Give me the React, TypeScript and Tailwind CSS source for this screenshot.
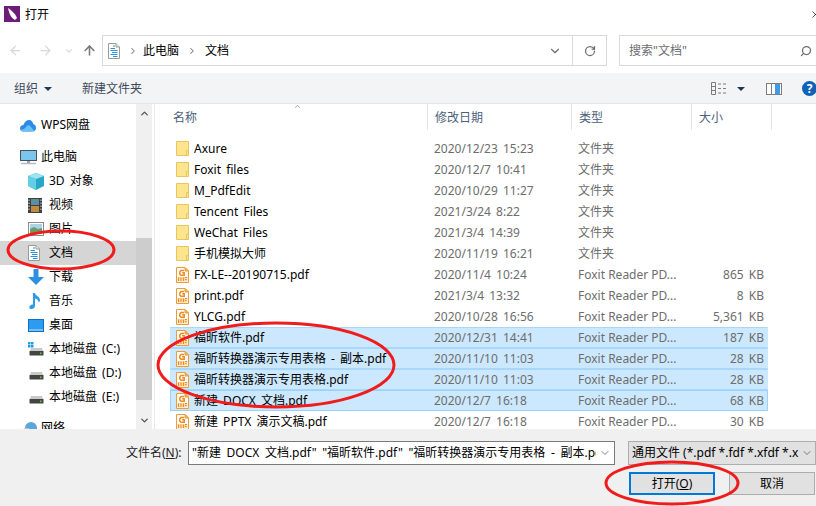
import { ArrowLeft, ArrowRight, ArrowUp, ChevronDown, ChevronRight, ChevronUp, RotateCw, Search, X } from 'lucide-react';
import type { ReactNode } from 'react';

const font = { fontFamily: '"Noto Sans", "Noto Sans CJK SC", sans-serif' };

const files = [
  { name: 'Axure', date: '2020/12/23 15:23', type: '文件夹', size: '', kind: 'folder' },
  { name: 'Foxit files', date: '2020/12/7 10:41', type: '文件夹', size: '', kind: 'folder' },
  { name: 'M_PdfEdit', date: '2020/10/29 11:27', type: '文件夹', size: '', kind: 'folder' },
  { name: 'Tencent Files', date: '2021/3/24 8:22', type: '文件夹', size: '', kind: 'folder' },
  { name: 'WeChat Files', date: '2021/3/4 14:39', type: '文件夹', size: '', kind: 'folder' },
  { name: '手机模拟大师', date: '2020/11/19 16:21', type: '文件夹', size: '', kind: 'folder' },
  { name: 'FX-LE--20190715.pdf', date: '2020/11/4 10:24', type: 'Foxit Reader PD...', size: '865 KB', kind: 'pdf' },
  { name: 'print.pdf', date: '2021/3/4 13:32', type: 'Foxit Reader PD...', size: '8 KB', kind: 'pdf' },
  { name: 'YLCG.pdf', date: '2020/10/28 16:56', type: 'Foxit Reader PD...', size: '5,361 KB', kind: 'pdf' },
  { name: '福昕软件.pdf', date: '2020/12/31 14:41', type: 'Foxit Reader PD...', size: '187 KB', kind: 'pdf', selected: true },
  { name: '福昕转换器演示专用表格 - 副本.pdf', date: '2020/11/10 11:03', type: 'Foxit Reader PD...', size: '28 KB', kind: 'pdf', selected: true },
  { name: '福昕转换器演示专用表格.pdf', date: '2020/11/10 11:03', type: 'Foxit Reader PD...', size: '28 KB', kind: 'pdf', selected: true },
  { name: '新建 DOCX 文档.pdf', date: '2020/12/7 16:18', type: 'Foxit Reader PD...', size: '68 KB', kind: 'pdf', selected: true, focused: true },
  { name: '新建 PPTX 演示文稿.pdf', date: '2020/12/7 16:18', type: 'Foxit Reader PD...', size: '30 KB', kind: 'pdf' },
];

function FolderIcon() {
  return (
    <svg width="13" height="15" viewBox="0 0 13 15" className="shrink-0">
      <path d="M.5.5h12v14H.5z" fill="#fde48f" stroke="#e9c65a" />
      <path d="M10.5 14.5V9.5h2" fill="none" stroke="#e9c65a" />
    </svg>
  );
}

function PdfIcon() {
  return (
    <svg width="13" height="16" viewBox="0 0 13 16" className="shrink-0">
      <path d="M.5.5h8.500l3.500 3.500v11.500H.5z" fill="#fff" stroke="#f09a33" />
      <path d="M9 .5V4h3.500z" fill="#f7b566" stroke="#f09a33" />
      <path d="M8 3.500H5L3.800 5v2l1.200 1.200h3.200V5.800H6.200" fill="none" stroke="#ef8a1f" strokeWidth="1.500" />
      <rect x="1.500" y="10" width="10" height="4.500" fill="#fcd9a8" />
      <path d="M2.500 10.500v3.500M5 10.500v3.500M7.500 10.500v3.500M9 10.500h2M9 12.500h1.500" stroke="#ef8a1f" strokeWidth="1" />
    </svg>
  );
}

function DocIcon() {
  return (
    <svg width="12" height="16" viewBox="0 0 12 16" className="shrink-0">
      <path d="M.5.5h7.500l3.500 3.500v11.500H.5z" fill="#fff" stroke="#9a9a9a" />
      <path d="M8 .5V4h3.500" fill="#e8e8e8" stroke="#9a9a9a" />
      <path d="M5 3h2M2.500 5.500h4.500M2.500 7.500h7M4 9.500h5.500M2.500 11.500h7M5 13.500h4.500" stroke="#2f8fdc" />
    </svg>
  );
}

function CloudIcon() {
  return (
    <svg width="16" height="13" viewBox="0 0 16 13">
      <path d="M3 12.500C.8 12.500 0 10.800 0 9.500 0 7.500 1.500 6 3.500 6 4.500 2.500 7 1 9 1c2.500 0 4 2 4.200 4C15 5.500 16 7.200 16 9c0 2-1.500 3.500-3.500 3.500z" fill="#2b8be6" />
      <path d="M3 12.500C1.500 12.500 .5 11.500 .5 10c1.500 1 3 .5 4-.5l2.500-2.500c1-1 2-1 3 0l4 4.500c-.5.700-1.200 1-2 1z" fill="#6cc0f7" />
    </svg>
  );
}

function PcIcon() {
  return (
    <svg width="17" height="15" viewBox="0 0 17 15">
      <rect x=".5" y=".5" width="16" height="10" fill="#7cc6ee" stroke="#47525c" />
      <path d="M7 11h3v2H7z" fill="#9aa5ad" />
      <path d="M1 13.500h15" stroke="#b4bcc2" strokeWidth="1.500" />
    </svg>
  );
}

function CubeIcon() {
  return (
    <svg width="16" height="17" viewBox="0 0 16 17">
      <path d="M8 0l8 3v10l-8 4-8-4V3z" fill="#2aa6c9" />
      <path d="M8 0l8 3-8 3-8-3z" fill="#9be6f0" />
      <path d="M0 3l8 3v11l-8-4z" fill="#62d0e2" />
    </svg>
  );
}

function VideoIcon() {
  return (
    <svg width="14" height="15" viewBox="0 0 14 15">
      <rect width="14" height="15" fill="#3c4043" />
      <rect x="3" y="1" width="8" height="6" fill="#5a8f9f" />
      <rect x="3" y="8" width="8" height="6" fill="#c28a3a" />
      <path d="M1 1.500v12M13 1.500v12" stroke="#d8d8d8" strokeDasharray="1.500 1.500" />
    </svg>
  );
}

function PictureIcon() {
  return (
    <svg width="16" height="14" viewBox="0 0 16 14">
      <rect x=".5" y=".5" width="15" height="13" fill="#fff" stroke="#8c8c8c" />
      <rect x="2" y="2" width="12" height="5" fill="#a9d3e8" />
      <path d="M2 7l4-2 4 2 4-1v6H2z" fill="#6f9a66" />
    </svg>
  );
}

function DownloadIcon() {
  return (
    <svg width="16" height="16" viewBox="0 0 16 16">
      <path d="M5.500 0h5v8H16l-8 8-8-8h5.500z" fill="#2f8fe0" />
    </svg>
  );
}

function MusicIcon() {
  return (
    <svg width="14" height="16" viewBox="0 0 14 16">
      <path d="M5 0h2c0 3 5 3 5 7 0 1-.5 2-1.500 2.500.500-2-1.500-3.500-3.500-4V13c0 1.800-1.800 3-3.800 3S1 14.800 1.500 13.500 3.500 11 5 11.500z" fill="#2f9be8" />
    </svg>
  );
}

function DesktopIcon() {
  return (
    <svg width="16" height="13" viewBox="0 0 16 13">
      <rect x=".5" y=".5" width="15" height="12" fill="#2f9bf0" stroke="#0f6fc4" />
      <path d="M1 11h14" stroke="#bfe2fb" />
    </svg>
  );
}

function DiskIcon({ win }: { win?: boolean }) {
  return (
    <svg width="16" height="14" viewBox="0 0 16 14">
      {win && (
        <g fill="#1e9be8">
          <rect x="0" y="0" width="2.500" height="2.500" />
          <rect x="3" y="0" width="2.500" height="2.500" />
          <rect x="0" y="3" width="2.500" height="2.500" />
          <rect x="3" y="3" width="2.500" height="2.500" />
        </g>
      )}
      <path d="M3 6h11l1 3H2z" fill="#c9c9c9" />
      <rect x="1.500" y="9" width="14" height="4.500" rx="0.500" fill="#444" />
      <rect x="12" y="10.500" width="1.500" height="1.500" fill="#62d04b" />
    </svg>
  );
}

function NetIcon() {
  return (
    <svg width="18" height="14" viewBox="0 0 18 14">
      <circle cx="11" cy="7" r="6" fill="#5aa7d8" />
      <path d="M0 10l5-3h4v5H0z" fill="#b7c4cf" />
    </svg>
  );
}

function NavRow({ icon, label, indent, active }: { icon: ReactNode; label: string; indent?: boolean; active?: boolean }) {
  return (
    <div className={`flex h-6 shrink-0 items-center ${indent ? 'pl-[28px]' : 'pl-5'} ${active ? 'bg-[#d5d5d5]' : ''}`}>
      <span className="flex w-[21px] shrink-0 items-center justify-start">{icon}</span>
      <span className="whitespace-nowrap text-black">{label}</span>
    </div>
  );
}

function HeaderCell({ label, className }: { label: string; className: string }) {
  return <div className={`h-[26px] shrink-0 truncate border-r border-[#e5e5e5] pl-[7px] pt-px leading-[26px] text-[#4c607a] ${className}`}>{label}</div>;
}

export default function App() {
  return (
    <div className="relative flex h-[506px] w-[816px] flex-col overflow-hidden bg-white text-xs [word-spacing:2px]" style={font}>
      {/* title bar */}
      <div className="flex h-[35px] shrink-0 items-start pl-1 pt-[6px]">
        <svg width="16" height="16" viewBox="0 0 16 16" className="shrink-0">
          <rect width="16" height="16" fill="#6b1e78" />
          <path d="M4 2c3 2 7 5 9 10l-2 2C7 12 5 7 4 2z" fill="#fff" />
        </svg>
        <span className="ml-[5px] pt-px text-black">打开</span>
        <X className="ml-auto mt-[3px] -mr-[5px] h-[11px] w-[11px] text-black" strokeWidth={1.5} />
      </div>

      {/* nav row */}
      <div className="flex h-[31px] shrink-0 items-center">
        <ArrowLeft className="ml-2 h-[15px] w-[15px] text-[#d8d8d8]" strokeWidth={2} />
        <ArrowRight className="ml-[15px] h-[15px] w-[15px] text-[#d8d8d8]" strokeWidth={2} />
        <ChevronDown className="ml-[11px] h-[10px] w-[10px] text-[#d0d0d0]" strokeWidth={2.5} />
        <ArrowUp className="ml-[8px] h-[15px] w-[15px] text-[#7a7a7a]" strokeWidth={2.5} />
        <div className="ml-[5px] flex h-[31px] w-[505px] items-center border border-[#d9d9d9] pl-[5px]">
          <DocIcon />
          <ChevronRight className="ml-[8px] h-[10px] w-[10px] text-[#7a7a7a]" strokeWidth={2.5} />
          <span className="ml-[5px] pt-px text-black">此电脑</span>
          <ChevronRight className="ml-[8px] h-[10px] w-[10px] text-[#7a7a7a]" strokeWidth={2.5} />
          <span className="ml-[8px] pt-px text-black">文档</span>
          <ChevronDown className="ml-auto h-[14px] w-[14px] text-[#6d6d6d]" strokeWidth={2} />
          <div className="ml-[10px] flex h-full w-[34px] items-center justify-center border-l border-[#d9d9d9]">
            <RotateCw className="h-[12px] w-[12px] text-[#6d6d6d]" strokeWidth={2.5} />
          </div>
        </div>
        <div className="ml-[12px] flex h-[31px] flex-1 items-center border-y border-l border-[#d9d9d9] pl-[9px] pr-1 text-[#6d6d6d]">
          <span>搜索"文档"</span>
          <Search className="ml-auto h-[12px] w-[12px] -scale-x-100 text-[#6d6d6d]" strokeWidth={2.5} />
        </div>
      </div>

      {/* toolbar */}
      <div className="mt-[7px] flex h-[31px] shrink-0 items-center border-b border-[#e6e6e6] bg-[#f3f4f6] pl-[14px] pt-px text-[#3c4a5c]">
        <span>组织</span>
        <span className="ml-[6px] h-0 w-0 border-x-[4px] border-t-[4px] border-x-transparent border-t-[#1f3655]" />
        <span className="ml-[30px]">新建文件夹</span>
        <svg width="17" height="13" viewBox="0 0 17 13" className="ml-auto">
          <path d="M.5.5h4v12h-4zM.5 4.500h4M.5 8.500h4M7 2h3M12 2h3M7 6.500h3M12 6.500h3M7 11h3M12 11h3" fill="none" stroke="#7d7d7d" />
        </svg>
        <span className="ml-[9px] h-0 w-0 border-x-[4px] border-t-[4px] border-x-transparent border-t-[#1f3655]" />
        <svg width="16" height="12" viewBox="0 0 16 12" className="ml-[21px]">
          <rect x=".5" y=".5" width="15" height="11" fill="#fff" stroke="#7d7d7d" />
          <rect x="9" y="1" width="5" height="10" fill="#3d9be9" />
          <path d="M5.500 1v10" stroke="#7d7d7d" />
        </svg>
        <div className="ml-[20px] -mr-px flex h-[15px] w-[15px] shrink-0 items-center justify-center rounded-full bg-[#0f62b8] text-[12px] font-bold text-white">?</div>
      </div>

      {/* body */}
      <div className="flex h-[325px] shrink-0 overflow-hidden">
        <div className="flex w-[136px] shrink-0 flex-col overflow-hidden pt-[9px]">
          <NavRow icon={<CloudIcon />} label="WPS网盘" />
          <div className="h-2 shrink-0" />
          <NavRow icon={<PcIcon />} label="此电脑" />
          <NavRow indent icon={<CubeIcon />} label="3D 对象" />
          <NavRow indent icon={<VideoIcon />} label="视频" />
          <NavRow indent icon={<PictureIcon />} label="图片" />
          <NavRow indent active icon={<DocIcon />} label="文档" />
          <NavRow indent icon={<DownloadIcon />} label="下载" />
          <NavRow indent icon={<MusicIcon />} label="音乐" />
          <NavRow indent icon={<DesktopIcon />} label="桌面" />
          <NavRow indent icon={<DiskIcon win />} label="本地磁盘 (C:)" />
          <NavRow indent icon={<DiskIcon />} label="本地磁盘 (D:)" />
          <NavRow indent icon={<DiskIcon />} label="本地磁盘 (E:)" />
          <div className="h-[7px] shrink-0" />
          <NavRow icon={<NetIcon />} label="网络" />
        </div>

        {/* sidebar scrollbar */}
        <div className="flex w-[16px] shrink-0 flex-col items-center bg-[#f0f0f0]">
          <ChevronUp className="mt-[4px] h-[11px] w-[11px] text-[#555]" strokeWidth={3} />
          <div className="mt-[119px] h-[162px] w-full shrink-0 bg-[#cdcdcd]" />
          <ChevronDown className="mt-[15px] h-[11px] w-[11px] text-[#555]" strokeWidth={3} />
        </div>
        <div className="ml-[2px] w-px shrink-0 bg-[#e9e9e9]" />

        <div className="relative min-w-0 flex-1">
          <div className="flex">
            <HeaderCell label="名称" className="ml-[11px] w-[262px]" />
            <HeaderCell label="修改日期" className="w-[144px]" />
            <HeaderCell label="类型" className="w-[120px]" />
            <HeaderCell label="大小" className="w-[80px]" />
          </div>
          <ChevronUp className="absolute left-[137px] -top-[2px] h-[9px] w-[11px] text-[#777]" strokeWidth={1.5} />
          <div className="mt-[8px] ml-[15px] w-[598px]">
            {files.map((f) => (
              <div
                key={f.name}
                className={`flex h-[21px] items-center border-y ${
                  f.focused
                    ? 'border-x border-[#99d1ff] bg-[#cce8ff]'
                    : f.selected
                      ? 'border-x border-x-[#cce8ff] border-y-[#a9d7fb] bg-[#cce8ff]'
                      : 'border-x border-transparent'
                }`}
              >
                <span className="ml-[5px] flex w-[18px] shrink-0">{f.kind === 'folder' ? <FolderIcon /> : <PdfIcon />}</span>
                <span className="w-[240px] shrink-0 truncate text-black">{f.name}</span>
                <span className="w-[144px] shrink-0 text-[#6d6d6d]">{f.date}</span>
                <span className="w-[115px] shrink-0 truncate text-[#6d6d6d] [word-spacing:0px]">{f.type}</span>
                <span className="w-[71px] shrink-0 text-right text-[#6d6d6d]">{f.size}</span>
              </div>
            ))}
          </div>
        </div>
      </div>

      {/* bottom panel */}
      <div className="flex min-h-0 flex-1 flex-col bg-[#f0f0f0]">
        <div className="mt-[12px] flex h-[24px] shrink-0 items-center">
          <span className="ml-[126px] w-[62px] shrink-0 text-[#222]">
            文件名(<span className="underline">N</span>):
          </span>
          <div className="flex h-[24px] w-[427px] shrink-0 items-center border border-[#7a7a7a] bg-white pl-[3px]">
            <span className="min-w-0 flex-1 overflow-hidden whitespace-nowrap text-black [word-spacing:2.5px]">"新建 DOCX 文档.pdf" "福昕软件.pdf" "福昕转换器演示专用表格 - 副本.pdf"</span>
            <ChevronDown className="mx-[3px] h-[12px] w-[12px] shrink-0 text-[#555]" strokeWidth={1.5} />
          </div>
          <div className="ml-[13px] flex h-[24px] flex-1 items-center border border-[#adadad] bg-[#e1e1e1] pl-[3px]">
            <span className="min-w-0 flex-1 overflow-hidden whitespace-nowrap text-black [word-spacing:0px]">通用文件 (*.pdf *.fdf *.xfdf *.x</span>
            <ChevronDown className="mx-[2px] h-[12px] w-[12px] shrink-0 text-[#555]" strokeWidth={1.5} />
          </div>
        </div>
        <div className="mt-[7px] flex shrink-0 pl-[629px]">
          <button className="h-[23px] w-[86px] border-2 border-[#0078d7] bg-[#e1e1e1] text-xs text-black">
            打开(<span className="underline">O</span>)
          </button>
          <button className="ml-[14px] h-[23px] w-[86px] border border-[#adadad] bg-[#e1e1e1] text-xs text-black">取消</button>
        </div>
      </div>

      {/* red hand-drawn ellipses on top of the screenshot */}
      <svg width="816" height="506" viewBox="0 0 816 506" className="pointer-events-none absolute left-0 top-0" fill="none" stroke="#f01c1c" strokeWidth="3">
        <ellipse cx="61" cy="250" rx="53" ry="19" />
        <ellipse cx="276" cy="365" rx="118" ry="42" />
        <ellipse cx="672" cy="483" rx="66" ry="21" />
      </svg>
    </div>
  );
}
